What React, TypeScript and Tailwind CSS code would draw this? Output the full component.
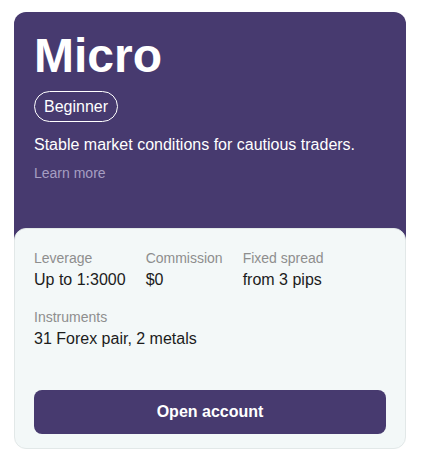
import React from "react";

export default function App() {
  const font = { fontFamily: '"Liberation Sans", Arial, sans-serif' };
  return (
    <div className="min-h-[449px] bg-white" style={font}>
      <div className="ml-[14px] pt-[12px] w-[392px]">
        <div className="h-[228px] rounded-t-[12px] bg-[#473a6f] px-5 pt-5 text-white">
          <h1 className="text-[48px] leading-[48px] font-bold">Micro</h1>
          <div className="mt-[11px] flex">
            <span className="h-[31px] flex items-center rounded-full border border-white px-[9px] text-[16px]">
              Beginner
            </span>
          </div>
          <p className="mt-[11px] text-[16px] leading-6">
            Stable market conditions for cautious traders.
          </p>
          <p className="mt-[6px] text-[14px] leading-5 text-[#a69ec2]">Learn more</p>
        </div>
        <div className="-mt-3 h-[221px] rounded-[12px] border border-[#e2e8e8] bg-[#f3f8f8] px-[19px] pt-[19px] pb-[14px] flex flex-col">
          <div className="flex gap-5">
            <div>
              <div className="text-[14px] leading-5 text-[#8e8e8e]">Leverage</div>
              <div className="text-[16px] leading-6 text-[#1c1c1c]">Up to 1:3000</div>
            </div>
            <div>
              <div className="text-[14px] leading-5 text-[#8e8e8e]">Commission</div>
              <div className="text-[16px] leading-6 text-[#1c1c1c]">$0</div>
            </div>
            <div>
              <div className="text-[14px] leading-5 text-[#8e8e8e]">Fixed spread</div>
              <div className="text-[16px] leading-6 text-[#1c1c1c]">from 3 pips</div>
            </div>
          </div>
          <div className="mt-[15px]">
            <div className="text-[14px] leading-5 text-[#8e8e8e]">Instruments</div>
            <div className="text-[16px] leading-6 text-[#1c1c1c]">31 Forex pair, 2 metals</div>
          </div>
          <button className="mt-auto h-[44px] w-full rounded-lg bg-[#473a6f] text-[16px] font-bold text-white">
            Open account
          </button>
        </div>
      </div>
    </div>
  );
}
